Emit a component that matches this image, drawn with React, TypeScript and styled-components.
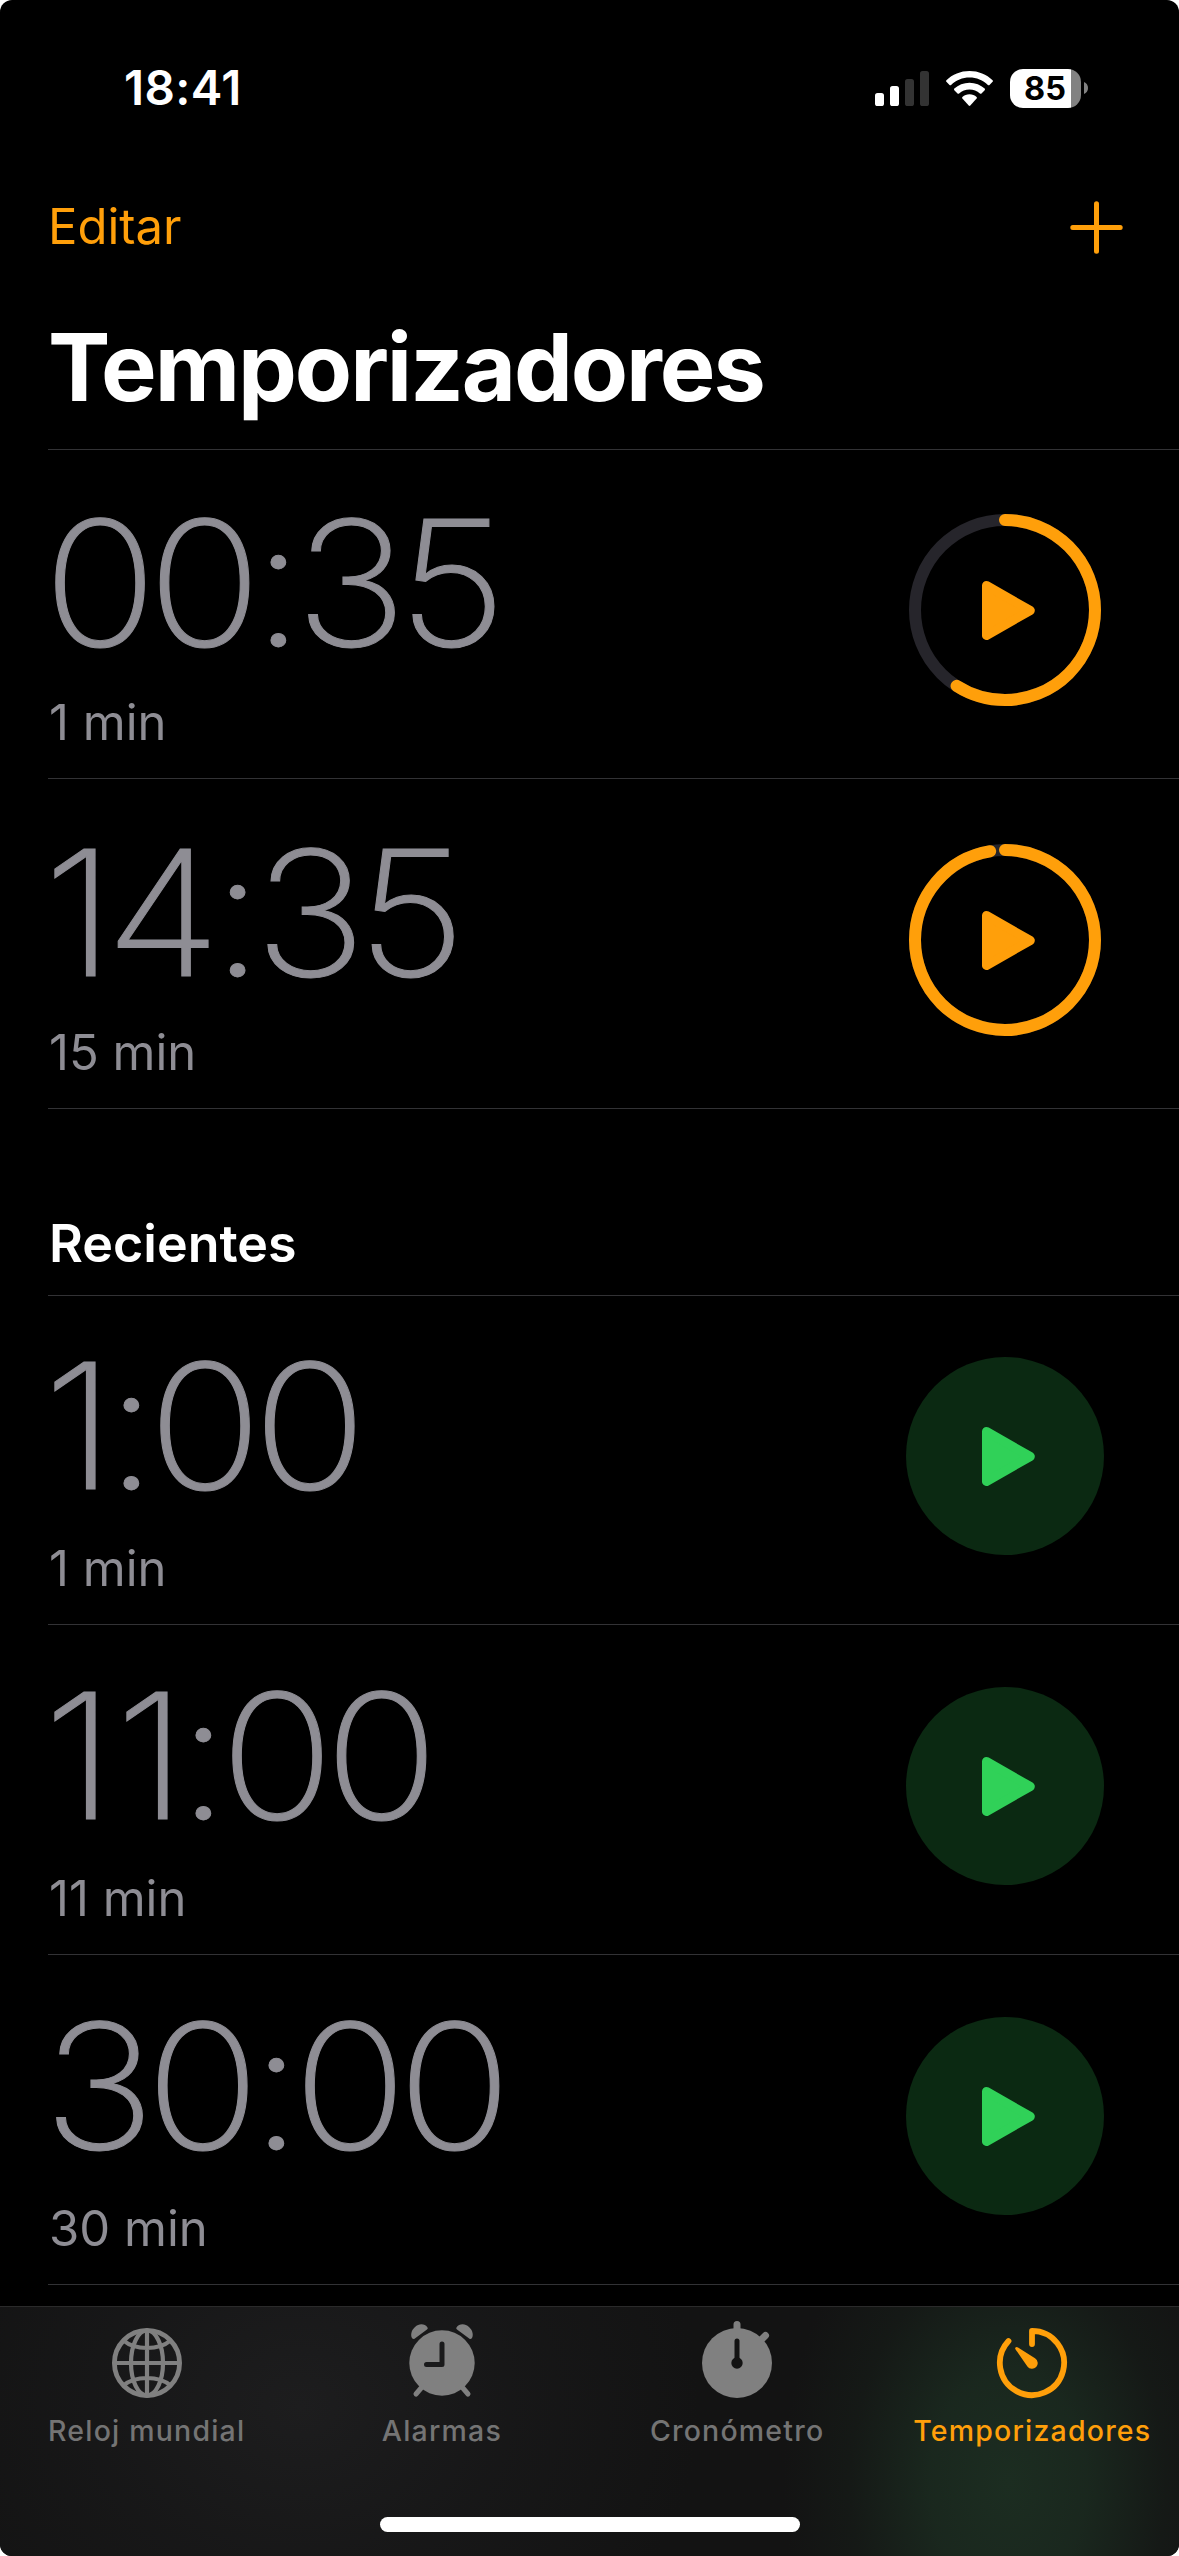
import React from "react";
import styled, { createGlobalStyle } from "styled-components";

const ORANGE = "#ff9f0a";
const GREEN = "#30d158";
const GRAY = "#8e8d94";
const DIVIDER = "#323235";

const GlobalStyle = createGlobalStyle`
  * { box-sizing: border-box; }
  html, body { margin: 0; background: #fff; }
  body { font-family: Inter, Roboto, "Liberation Sans", sans-serif; }
`;

const Screen = styled.div`
  display: flex;
  flex-direction: column;
  width: 1179px;
  height: 2556px;
  overflow: hidden;
  border-radius: 12px;
  background: #000;
  color: #fff;
  white-space: nowrap;
`;

const StatusBar = styled.header`
  display: flex;
  flex: none;
  justify-content: space-between;
  align-items: center;
  height: 176px;
  padding: 0 91px 0 124px;
`;

const Clock = styled.time`
  font-size: 47.5px;
  font-weight: 600;
  line-height: 58px;
  letter-spacing: 0.4px;
`;

const Indicators = styled.div`
  display: flex;
  align-items: center;
  gap: 17px;
`;

const Battery = styled.div`
  display: flex;
  align-items: center;
  gap: 3px;
`;

const BatteryBody = styled.div<{ $level: number }>`
  display: flex;
  align-items: center;
  justify-content: center;
  width: 71px;
  height: 39px;
  padding-right: 1px;
  border-radius: 13px;
  background: linear-gradient(90deg, #fff ${(p) => p.$level}%, #828282 ${(p) => p.$level}%);
  color: #000;
  font-size: 32.5px;
  font-weight: 700;
  line-height: 39px;
`;

const NavBar = styled.nav`
  display: flex;
  flex: none;
  justify-content: space-between;
  align-items: center;
  height: 102px;
  padding: 0 56px 0 48px;
`;

const TextButton = styled.button`
  padding: 0;
  border: 0;
  background: none;
  color: ${ORANGE};
  font: 400 49px/60px Inter, Roboto, sans-serif;
`;

const IconButton = styled.button`
  display: flex;
  padding: 0;
  border: 0;
  background: none;
  color: ${ORANGE};
`;

const Title = styled.h1`
  flex: none;
  height: 172px;
  margin: 0 0 0 48px;
  padding-top: 33px;
  border-bottom: 1px solid ${DIVIDER};
  font-size: 93.5px;
  font-weight: 700;
  line-height: 113px;
  letter-spacing: -2.05px;
`;

const SectionTitle = styled.h2`
  flex: none;
  height: 187px;
  margin: 0 0 0 48px;
  padding: 103px 0 0 1px;
  border-bottom: 1px solid ${DIVIDER};
  font-size: 52px;
  font-weight: 600;
  line-height: 64px;
`;

const Row = styled.article<{ $height: number }>`
  display: flex;
  flex: none;
  justify-content: space-between;
  align-items: flex-end;
  height: ${(p) => p.$height}px;
  margin-left: 48px;
  padding: 0 75px 25px 0;
  border-bottom: 1px solid ${DIVIDER};
  color: ${GRAY};
`;

const Times = styled.div<{ $gap: number }>`
  display: flex;
  flex-direction: column;
  gap: ${(p) => p.$gap}px;
`;

const Remaining = styled.div`
  margin-left: -5px;
  font-size: 174.5px;
  font-weight: 200;
  line-height: 212px;
  letter-spacing: -8.8px;
  transform: scaleX(1.083);
  transform-origin: left;
  -webkit-text-stroke: 1px ${GRAY};
`;

const LooseDigit = styled.span`
  letter-spacing: 0;
`;

const Duration = styled.div`
  padding-left: 1px;
  font-size: 49px;
  font-weight: 400;
  line-height: 60px;
`;

const PlayButton = styled.button<{ $fill: string; $color: string }>`
  display: flex;
  flex: none;
  width: 198px;
  height: 198px;
  margin-bottom: 44px;
  padding: 0;
  border: 0;
  border-radius: 50%;
  background: ${(p) => p.$fill};
  color: ${(p) => p.$color};
`;

const TabBar = styled.footer`
  display: flex;
  flex: none;
  flex-direction: column;
  align-items: center;
  height: 250px;
  margin-top: auto;
  border-top: 1px solid #2a2a2a;
  background:
    radial-gradient(ellipse 225px 320px at 1008px 175px, #1c2d21 0%, rgba(27, 43, 32, 0.85) 35%, rgba(24, 34, 27, 0.4) 70%, rgba(20, 20, 20, 0) 100%),
    radial-gradient(ellipse 400px 330px at 300px 100px, #1d1d1e 0%, rgba(25, 25, 26, 0.7) 50%, rgba(20, 20, 20, 0) 100%),
    #131313;
`;

const Tabs = styled.div`
  display: grid;
  grid-template-columns: repeat(4, 295.2px);
  justify-content: center;
  width: 1179px;
  height: 210px;
`;

const Tab = styled.a<{ $active?: boolean }>`
  display: flex;
  flex-direction: column;
  align-items: center;
  padding-top: 11px;
  color: ${(p) => (p.$active ? ORANGE : "#808080")};
`;

const TabLabel = styled.span<{ $active?: boolean }>`
  margin-top: 5px;
  color: ${(p) => (p.$active ? ORANGE : "#747474")};
  font-size: 28.5px;
  font-weight: 500;
  line-height: 36px;
  letter-spacing: 1.2px;
`;

const HomeIndicator = styled.div`
  width: 420px;
  height: 15px;
  border-radius: 8px;
  background: #fff;
`;

const SignalIcon = () => (
  <svg width="54" height="37" viewBox="0 0 54 37">
    <rect x="0" y="23" width="9" height="13" rx="2.6" fill="#fff" />
    <rect x="15" y="16" width="9" height="20" rx="2.6" fill="#fff" />
    <rect x="30" y="9" width="9" height="27" rx="2.6" fill="#333" />
    <rect x="45" y="1" width="9" height="35" rx="2.6" fill="#333" />
  </svg>
);

const WifiIcon = () => (
  <svg width="47" height="37" viewBox="0 0 47 37" fill="#fff">
    <path d="M23.5 1C32.4 1 40.600 4.400 46.600 10.200Q47.300 11 46.600 11.800L43.500 14.900Q42.700 15.600 41.900 14.900C37 10.200 30.500 7.600 23.500 7.600S10 10.200 5.100 14.900Q4.300 15.600 3.500 14.900L.4 11.800Q-.3 11 .4 10.200C6.400 4.400 14.600 1 23.500 1Z" />
    <path d="M23.500 12.700C29.300 12.700 34.700 14.900 38.700 18.600Q39.400 19.400 38.700 20.200L35.500 23.400Q34.700 24.100 33.900 23.400C31.100 20.900 27.500 19.400 23.500 19.400S15.900 20.900 13.100 23.400Q12.300 24.100 11.500 23.400L8.300 20.200Q7.600 19.400 8.300 18.600C12.300 14.900 17.700 12.700 23.500 12.700Z" />
    <path d="M23.500 24.300C26.200 24.300 28.700 25.300 30.600 27Q31.300 27.800 30.600 28.600L24.300 35.500Q23.500 36.300 22.700 35.500L16.400 28.600Q15.700 27.800 16.400 27C18.300 25.300 20.800 24.300 23.500 24.300Z" />
  </svg>
);

const BatteryNub = () => (
  <svg width="4" height="12" viewBox="0 0 4 12">
    <path d="M0 0C2.500 1 4 3.300 4 6S2.500 11 0 12Z" fill="#828282" />
  </svg>
);

const PlusIcon = () => (
  <svg width="53" height="53" viewBox="0 0 53 53" stroke="currentColor" strokeWidth="5" strokeLinecap="round">
    <path d="M26.500 2.800V50.200M2.800 26.500H50.200" />
  </svg>
);

const CIRCUMFERENCE = 2 * Math.PI * 90;

const PlayDial = ({ progress }: { progress?: number }) => (
  <svg width="198" height="198" viewBox="-99 -99 198 198">
    {progress !== undefined && (
      <g fill="none" strokeWidth="12" transform="rotate(-90)">
        <circle r="90" stroke="#26252b" />
        <circle
          r="90"
          stroke="currentColor"
          strokeLinecap="round"
          strokeDasharray={`${CIRCUMFERENCE * progress} ${CIRCUMFERENCE}`}
        />
      </g>
    )}
    <path
      d="M-18.500 -24.500L25.300 .5L-18.500 25.500Z"
      fill="currentColor"
      stroke="currentColor"
      strokeWidth="9"
      strokeLinejoin="round"
    />
  </svg>
);

const GlobeIcon = () => (
  <svg width="84" height="90" viewBox="-42 -45 84 90" fill="none" stroke="currentColor" strokeWidth="4.200">
    <circle r="32.600" strokeWidth="4.800" />
    <ellipse rx="16" ry="32.500" />
    <path d="M0 -33V33M-33 0H33M-23.500 -22.500C-12 -12.500 12 -12.500 23.500 -22.500M-23.500 22.500C-12 12.500 12 12.500 23.500 22.500" />
  </svg>
);

const AlarmIcon = () => (
  <svg width="84" height="90" viewBox="-42 -45 84 90" fill="currentColor">
    <circle r="32.700" />
    <path d="M-20 24L-26 31M20 24L26 31" stroke="currentColor" strokeWidth="5" strokeLinecap="round" />
    <path d="M-14.500 -35.500C-17 -39.500 -23 -40 -27 -36C-31 -32.500 -31.500 -27.500 -30 -25C-29 -23.600 -27.500 -24 -26.500 -25L-15 -33.500Q-13.700 -34.500 -14.500 -35.500Z" />
    <path d="M14.500 -35.500C17 -39.500 23 -40 27 -36C31 -32.500 31.500 -27.500 30 -25C29 -23.600 27.500 -24 26.500 -25L15 -33.500Q13.700 -34.500 14.500 -35.500Z" />
    <path d="M0 -19V1.500H-15.500" fill="none" stroke="#1a1a1b" strokeWidth="5" strokeLinecap="round" strokeLinejoin="round" />
  </svg>
);

const StopwatchIcon = () => (
  <svg width="84" height="90" viewBox="-42 -45 84 90" fill="currentColor">
    <circle r="35" />
    <path d="M0 -38.500V-30M25 -24L28.500 -27.500" stroke="currentColor" strokeWidth="7" strokeLinecap="round" />
    <path d="M0 -22V0" stroke="#131313" strokeWidth="5" strokeLinecap="round" />
    <circle r="5.700" fill="#131313" />
  </svg>
);

const TimerIcon = () => (
  <svg width="84" height="90" viewBox="-42 -45 84 90" fill="none" stroke="currentColor" strokeWidth="5.800" strokeLinecap="round" strokeLinejoin="round">
    <path d="M0 -19V-32.100A32.100 32.100 0 1 1 -23.500 -21.900" />
    <path d="M-16.500 -15.500Q-15.500 -16.500 -14 -15.500L3 -4.700A5.700 5.700 0 1 1 -4.600 3.500L-16.400 -13.500Q-17.300 -14.700 -16.500 -15.500Z" fill="currentColor" stroke="none" />
  </svg>
);

type Timer = { left: string; total: string; progress?: number; height: number };

const active: Timer[] = [
  { left: "00:35", total: "1 min", progress: 0.5895, height: 329 },
  { left: "14:35", total: "15 min", progress: 0.972, height: 330 },
];

const recent: Timer[] = [
  { left: "1:00", total: "1 min", height: 329 },
  { left: "11:00", total: "11 min", height: 330 },
  { left: "30:00", total: "30 min", height: 330 },
];

/* A pair of ones is set looser than the other digits. */
const Digits = ({ value }: { value: string }) =>
  value.startsWith("11") ? (
    <>
      <LooseDigit>1</LooseDigit>
      {value.slice(1)}
    </>
  ) : (
    <>{value}</>
  );

const TimerRow = ({ left, total, progress, height }: Timer) => (
  <Row $height={height}>
    <Times $gap={progress === undefined ? 7 : 4}>
      <Remaining>
        <Digits value={left} />
      </Remaining>
      <Duration>{total}</Duration>
    </Times>
    <PlayButton
      aria-label="Iniciar"
      $fill={progress === undefined ? "#0b2912" : "transparent"}
      $color={progress === undefined ? GREEN : ORANGE}
    >
      <PlayDial progress={progress} />
    </PlayButton>
  </Row>
);

export default function App() {
  return (
    <>
      <GlobalStyle />
      <Screen>
        <StatusBar>
          <Clock>18:41</Clock>
          <Indicators>
            <SignalIcon />
            <WifiIcon />
            <Battery>
              <BatteryBody $level={86}>85</BatteryBody>
              <BatteryNub />
            </Battery>
          </Indicators>
        </StatusBar>
        <NavBar>
          <TextButton>Editar</TextButton>
          <IconButton aria-label="Añadir">
            <PlusIcon />
          </IconButton>
        </NavBar>
        <Title>Temporizadores</Title>
        {active.map((t) => (
          <TimerRow key={t.left} {...t} />
        ))}
        <SectionTitle>Recientes</SectionTitle>
        {recent.map((t) => (
          <TimerRow key={t.left} {...t} />
        ))}
        <TabBar>
          <Tabs>
            <Tab>
              <GlobeIcon />
              <TabLabel>Reloj mundial</TabLabel>
            </Tab>
            <Tab>
              <AlarmIcon />
              <TabLabel>Alarmas</TabLabel>
            </Tab>
            <Tab>
              <StopwatchIcon />
              <TabLabel>Cronómetro</TabLabel>
            </Tab>
            <Tab $active>
              <TimerIcon />
              <TabLabel $active>Temporizadores</TabLabel>
            </Tab>
          </Tabs>
          <HomeIndicator />
        </TabBar>
      </Screen>
    </>
  );
}
